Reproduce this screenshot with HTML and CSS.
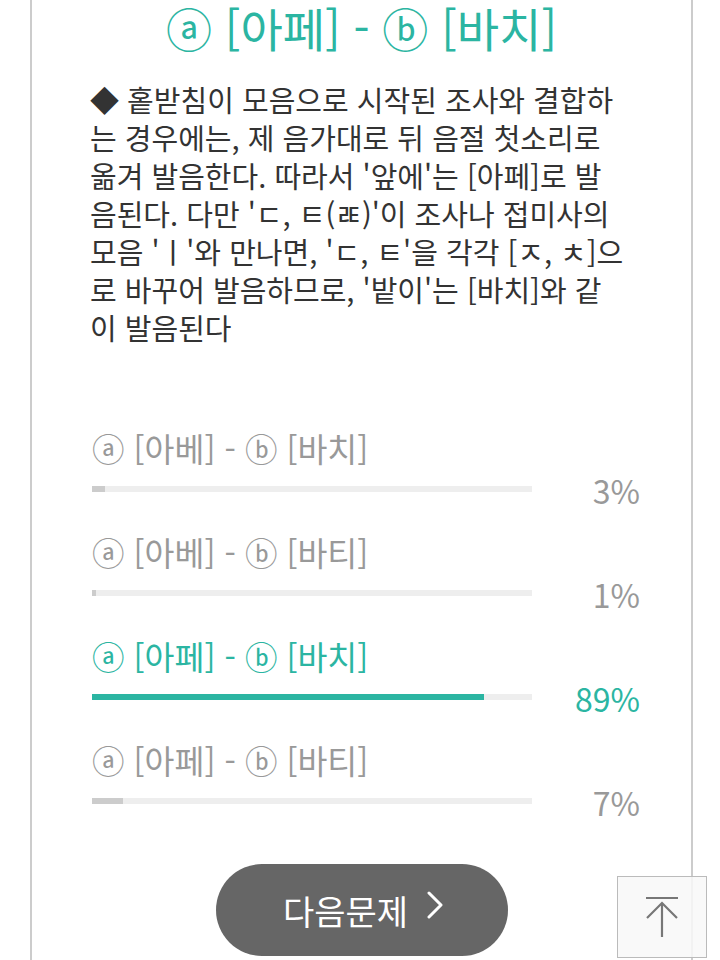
FILE: index.html
```html
<!DOCTYPE html>
<html lang="ko">
<head>
<meta charset="utf-8">
<link rel="stylesheet" href="styles.css">
</head>
<body>
<div class="card">
  <h1 class="answer">ⓐ [아페] - ⓑ [바치]</h1>
  <p class="explain">◆ 홑받침이 모음으로 시작된 조사와 결합하<br>는 경우에는, 제 음가대로 뒤 음절 첫소리로<br>옮겨 발음한다. 따라서 '앞에'는 [아페]로 발<br>음된다. 다만 'ㄷ, ㅌ(ㄾ)'이 조사나 접미사의<br>모음 'ㅣ'와 만나면, 'ㄷ, ㅌ'을 각각 [ㅈ, ㅊ]으<br>로 바꾸어 발음하므로, '밭이'는 [바치]와 같<br>이 발음된다</p>

  <ul class="options">
    <li class="option">
      <div class="label">ⓐ [아베] - ⓑ [바치]</div>
      <div class="stat">
        <div class="track"><div class="fill" style="width:3%"></div></div>
        <div class="pct">3%</div>
      </div>
    </li>
    <li class="option">
      <div class="label">ⓐ [아베] - ⓑ [바티]</div>
      <div class="stat">
        <div class="track"><div class="fill" style="width:1%"></div></div>
        <div class="pct">1%</div>
      </div>
    </li>
    <li class="option correct">
      <div class="label">ⓐ [아페] - ⓑ [바치]</div>
      <div class="stat">
        <div class="track"><div class="fill" style="width:89%"></div></div>
        <div class="pct">89%</div>
      </div>
    </li>
    <li class="option">
      <div class="label">ⓐ [아페] - ⓑ [바티]</div>
      <div class="stat">
        <div class="track"><div class="fill" style="width:7%"></div></div>
        <div class="pct">7%</div>
      </div>
    </li>
  </ul>

  <div class="actions">
    <button class="next"><span class="next-text">다음문제</span>
      <svg class="chev" width="18" height="28" viewBox="0 0 18 28"><path d="M3 2 L15 14 L3 26" fill="none" stroke="#fff" stroke-width="3" stroke-linecap="round" stroke-linejoin="round"/></svg>
    </button>
  </div>
</div>

<button class="totop" aria-label="맨 위로">
  <svg width="40" height="46" viewBox="0 0 40 46"><path d="M4 1 H36 M5 21 L20 6 L35 21 M20 6 V40" fill="none" stroke="#777" stroke-width="2.2"/></svg>
</button>
</body>
</html>
```

FILE: styles.css
```css
html, body {
  margin: 0;
  padding: 0;
  background: #fff;
}
body {
  font-family: "Noto Sans CJK KR", "Noto Sans", sans-serif;
}
.card {
  margin: 0 27px 0 30px;
  border-left: 2px solid #ccc;
  border-right: 2px solid #ccc;
  min-height: 960px;
  padding: 0 58px;
  box-sizing: border-box;
}
.answer {
  margin: 0;
  font-size: 46px;
  line-height: 54px;
  font-weight: 400;
  color: #2bb5a2;
  text-align: center;
  white-space: nowrap;
}
.explain {
  margin: 26px 0 0 0;
  font-size: 29px;
  line-height: 38px;
  color: #333;
  white-space: nowrap;
}
.options {
  list-style: none;
  margin: 82px -7px 0 2px;
  padding: 0;
}
.option {
  margin-bottom: 22px;
  color: #999;
}
.label {
  font-size: 32.5px;
  line-height: 40px;
  white-space: nowrap;
}
.stat {
  display: flex;
  align-items: flex-start;
  margin-top: 2px;
}
.track {
  width: 440px;
  height: 6px;
  margin-top: 16px;
  background: #eee;
}
.fill {
  height: 100%;
  background: #ccc;
}
.pct {
  flex: 1;
  text-align: right;
  font-size: 32px;
  line-height: 40px;
}
.correct {
  color: #2bb5a2;
}
.correct .fill {
  background: #2bb5a2;
}
.actions {
  display: flex;
  justify-content: center;
  margin-top: 42px;
}
.next {
  width: 292px;
  height: 92px;
  border: none;
  border-radius: 46px;
  background: #666;
  color: #fff;
  font-family: inherit;
  font-size: 34px;
  display: flex;
  align-items: center;
  justify-content: center;
  gap: 18px;
  padding: 0 0 0 4px;
}
.chev {
  margin-top: -10px;
}
.totop {
  position: fixed;
  left: 617px;
  top: 876px;
  width: 90px;
  height: 82px;
  border: 1px solid #bbb;
  background: rgba(248, 248, 248, 0.85);
  padding: 0;
  display: flex;
  align-items: flex-start;
  justify-content: center;
  box-sizing: border-box;
}
.totop svg {
  margin-top: 20px;
}
```
